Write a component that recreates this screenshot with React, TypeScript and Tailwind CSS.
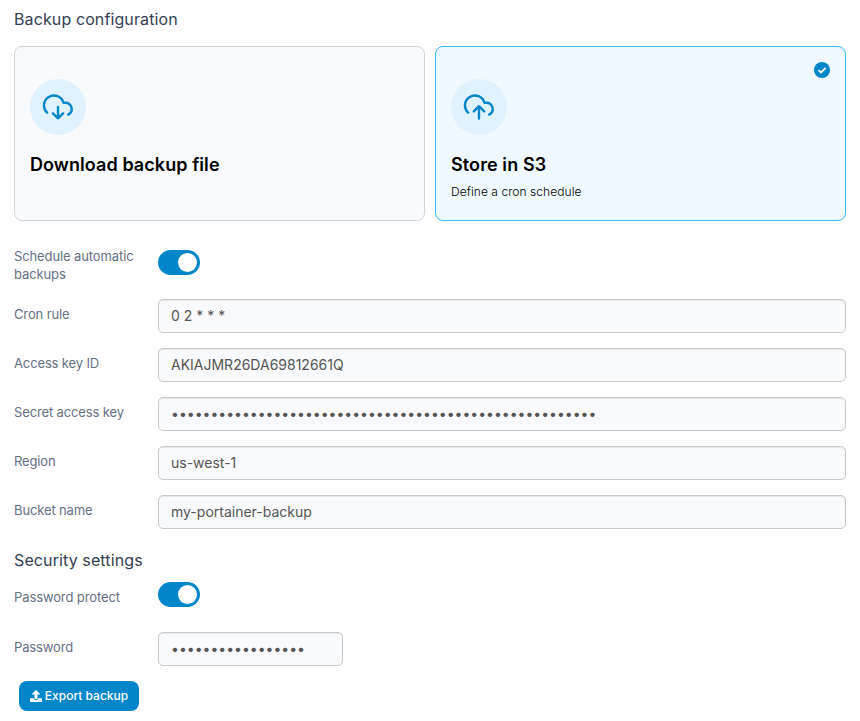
import type { ReactNode } from 'react';
import { FaUpload } from 'react-icons/fa';

const CLOUD = 'M5.1 21.6A9.9 9.9 0 1 1 21.4 11.7H23A6.3 6.3 0 0 1 26.2 23.6';

function CloudBadge({ arrow }: { arrow: string }) {
  return (
    <div className="flex size-14 items-center justify-center rounded-full bg-[#e0f2fe]">
      <svg width="32" height="32" viewBox="0 0 32 32" fill="none" stroke="#0086c9" strokeWidth="2.4" strokeLinecap="round" strokeLinejoin="round">
        <path d={CLOUD} />
        <path d={arrow} />
      </svg>
    </div>
  );
}

function Title({ children }: { children: ReactNode }) {
  return <h2 className="text-[16px] leading-6 tracking-[0.11px] text-[#344054]">{children}</h2>;
}

function Toggle() {
  return (
    <button role="switch" aria-checked="true" className="flex h-[25px] w-[42px] items-center justify-end rounded-full bg-[#0086c9] pr-[3px]">
      <span className="size-[19px] rounded-full bg-white" />
    </button>
  );
}

function Field({ children, className = 'w-full' }: { children: ReactNode; className?: string }) {
  return (
    <div className={`flex h-[34px] items-center rounded-[5px] border border-[#c8cacc] bg-[#f9fafb] px-3 text-[14px] leading-5 text-[#555555] shadow-[inset_0_1px_1px_rgba(0,0,0,0.075)] ${className}`}>
      {children}
    </div>
  );
}

function Dots({ count }: { count: number }) {
  return <span>{'•'.repeat(count)}</span>;
}

function Row({ label, children }: { label: string; children: ReactNode }) {
  return (
    <div className="mb-[15px] flex h-[34px]">
      <div className="w-[144px] shrink-0 pt-[6px] text-[13px] leading-[18px] tracking-[-0.13px] text-[#667085]">{label}</div>
      {children}
    </div>
  );
}

export default function App() {
  return (
    <main className="h-[721px] w-[860px] overflow-hidden bg-white px-[14px] pt-[7px] font-['Inter',sans-serif]">
      <Title>Backup configuration</Title>
      <div className="mt-[15px] grid grid-cols-2 gap-[10px]">
        <div className="h-[175px] rounded-lg border border-[#d0d5dd] bg-[#f9fafb] px-[15px] pt-8">
          <CloudBadge arrow="M16 16V27.3M10.9 22.4L16 27.3L21.1 22.4" />
          <h3 className="mt-[17px] text-[18px] leading-[26px] font-semibold tracking-[0.07px] text-black">Download backup file</h3>
        </div>
        <div className="relative h-[175px] rounded-lg border border-[#36bffa] bg-[#f0f9ff] px-[15px] pt-8">
          <svg className="absolute top-[15px] right-[15px]" width="16" height="16" viewBox="0 0 16 16">
            <circle cx="8" cy="8" r="8" fill="#0086c9" />
            <path d="M4.5 8.1L7 10.4L11.6 5.8" fill="none" stroke="white" strokeWidth="1.8" />
          </svg>
          <CloudBadge arrow="M16 15.2V27.5M10.8 20.4L16 15.2L21.2 20.4" />
          <h3 className="mt-[17px] text-[18px] leading-[26px] font-semibold tracking-[0.1px] text-black">Store in S3</h3>
          <p className="mt-[5px] text-[12px] leading-[18px] font-light tracking-[0.06px] text-black">Define a cron schedule</p>
        </div>
      </div>

      <div className="mt-[26px] mb-[13px] flex h-[39px]">
        <div className="w-[144px] shrink-0 text-[13px] leading-[18px] tracking-[-0.11px] text-[#667085]">Schedule automatic<br />backups</div>
        <div className="pt-[3px]"><Toggle /></div>
      </div>
      <Row label="Cron rule"><Field>0 2 * * *</Field></Row>
      <Row label="Access key ID"><Field>AKIAJMR26DA69812661Q</Field></Row>
      <Row label="Secret access key"><Field><Dots count={54} /></Field></Row>
      <Row label="Region"><Field>us-west-1</Field></Row>
      <Row label="Bucket name"><Field>my-portainer-backup</Field></Row>

      <div className="mt-[19px]"><Title>Security settings</Title></div>
      <div className="mt-[10px] mb-[16px] flex h-[34px]">
        <div className="w-[144px] shrink-0 pt-[6px] text-[13px] leading-[18px] tracking-[-0.11px] text-[#667085]">Password protect</div>
        <Toggle />
      </div>
      <Row label="Password"><Field className="w-[185px]"><Dots count={17} /></Field></Row>
      <button className="ml-[5px] flex h-[30px] w-[120px] items-center justify-center gap-[3px] rounded-lg bg-[#0086c9] text-[12px] font-medium text-white">
        <FaUpload size={12} />
        <span>Export backup</span>
      </button>
    </main>
  );
}
